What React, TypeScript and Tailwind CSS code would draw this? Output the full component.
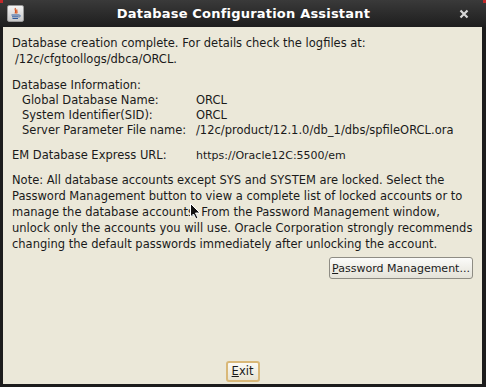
import React from "react";

const font = "font-['DejaVu_Sans','Liberation_Sans',sans-serif]";

function JavaIcon() {
  return (
    <div className="flex h-[17px] w-[17px] items-center justify-center rounded-[2px] border border-[#9a9a9a] bg-gradient-to-b from-[#f4f4f4] to-[#c9c9c9]">
      <svg width="13" height="13" viewBox="0 0 13 13">
        <path d="M6.5 1 C5 3 8 4 6 6.5 M8 2.5 C7 4 9 5 7.5 6.5" stroke="#d9541e" strokeWidth="1.2" fill="none" />
        <path d="M2.5 8 H10 M3 9.8 H9.5 M3.5 11.5 H9" stroke="#2f5a9e" strokeWidth="1" />
        <path d="M10 8 C12 8 12 10 9.5 10" stroke="#2f5a9e" strokeWidth="0.8" fill="none" />
      </svg>
    </div>
  );
}

function Row({ label, value }: { label: string; value: string }) {
  return (
    <div className="flex h-[15px] items-center whitespace-nowrap">
      <span className="w-[184px] shrink-0 pl-[10px]">{label}</span>
      <span>{value}</span>
    </div>
  );
}

export default function App() {
  return (
    <div className={`relative flex h-[387px] w-[486px] flex-col bg-[#1c1c1c] ${font}`}>
      {/* title bar */}
      <div className="relative flex h-[27px] items-center bg-gradient-to-b from-[#3a3a3a] to-[#1e1e1e] px-[7px]">
        <div className="absolute left-0 top-0 h-[3px] w-[3px] bg-[#c0282a]" />
        <div className="absolute right-0 top-0 h-[3px] w-[3px] bg-[#c0282a]" />
        <JavaIcon />
        <div className="flex-1 pl-[4px] text-center text-[13px] font-bold leading-none tracking-[0.2px] text-white">
          Database Configuration Assistant
        </div>
        <svg width="10" height="10" viewBox="0 0 10 10" className="mr-[10px]">
          <path d="M1.5 1.5 L8.5 8.5 M8.5 1.5 L1.5 8.5" stroke="#d8d8d8" strokeWidth="2.2" />
        </svg>
      </div>

      {/* body */}
      <div className="ml-[3px] mr-[4px] mb-[3px] flex flex-1 flex-col bg-[#ebe8d9] text-[11.5px] leading-[15px] text-[#1a1a1a]">
        <div className="flex flex-1 flex-col px-[9px] pt-[9px]">
          <div className="whitespace-nowrap">Database creation complete. For details check the logfiles at:</div>
          <div className="mt-[1px] pl-[3px]">/12c/cfgtoollogs/dbca/ORCL.</div>

          <div className="mt-[11px]">Database Information:</div>
          <Row label="Global Database Name:" value="ORCL" />
          <Row label="System Identifier(SID):" value="ORCL" />
          <Row label="Server Parameter File name:" value="/12c/product/12.1.0/db_1/dbs/spfileORCL.ora" />

          <div className="mt-[10px] flex h-[15px] items-center whitespace-nowrap">
            <span className="w-[184px] shrink-0">EM Database Express URL:</span>
            <span className="text-[11px]">https://Oracle12C:5500/em</span>
          </div>

          <div className="mt-[9px] whitespace-nowrap leading-[16px]">
            Note: All database accounts except SYS and SYSTEM are locked. Select the
            <br />
            Password Management button to view a complete list of locked accounts or to
            <br />
            manage the database accounts. From the Password Management window,
            <br />
            unlock only the accounts you will use. Oracle Corporation strongly recommends
            <br />
            changing the default passwords immediately after unlocking the account.
          </div>

          <div className="mt-[5px] flex justify-end">
            <button className="flex h-[22px] w-[144px] items-center justify-center whitespace-nowrap rounded-[3px] border border-[#8e8c84] bg-gradient-to-b from-[#fbfbf9] to-[#e4e2d8] text-[11px]">
              <span>
                <span className="underline">P</span>assword Management...
              </span>
            </button>
          </div>
        </div>

        <div className="flex justify-center pb-[2px]">
          <button className="flex h-[21px] w-[34px] items-center justify-center rounded-[3px] border-[2px] border-[#d9b878] bg-gradient-to-b from-[#fbfaf5] to-[#e7e3d3] text-[11.5px]">
            <span>
              <span className="underline">E</span>xit
            </span>
          </button>
        </div>
      </div>

      {/* mouse pointer */}
      <svg className="absolute left-[190px] top-[203px]" width="11" height="17" viewBox="0 0 11 17">
        <path d="M0.5 0.5 L0.5 14 L3.5 11 L6 16 L8 15 L5.5 10 L10 10 Z" fill="#111" stroke="#fff" strokeWidth="1" />
      </svg>
    </div>
  );
}
